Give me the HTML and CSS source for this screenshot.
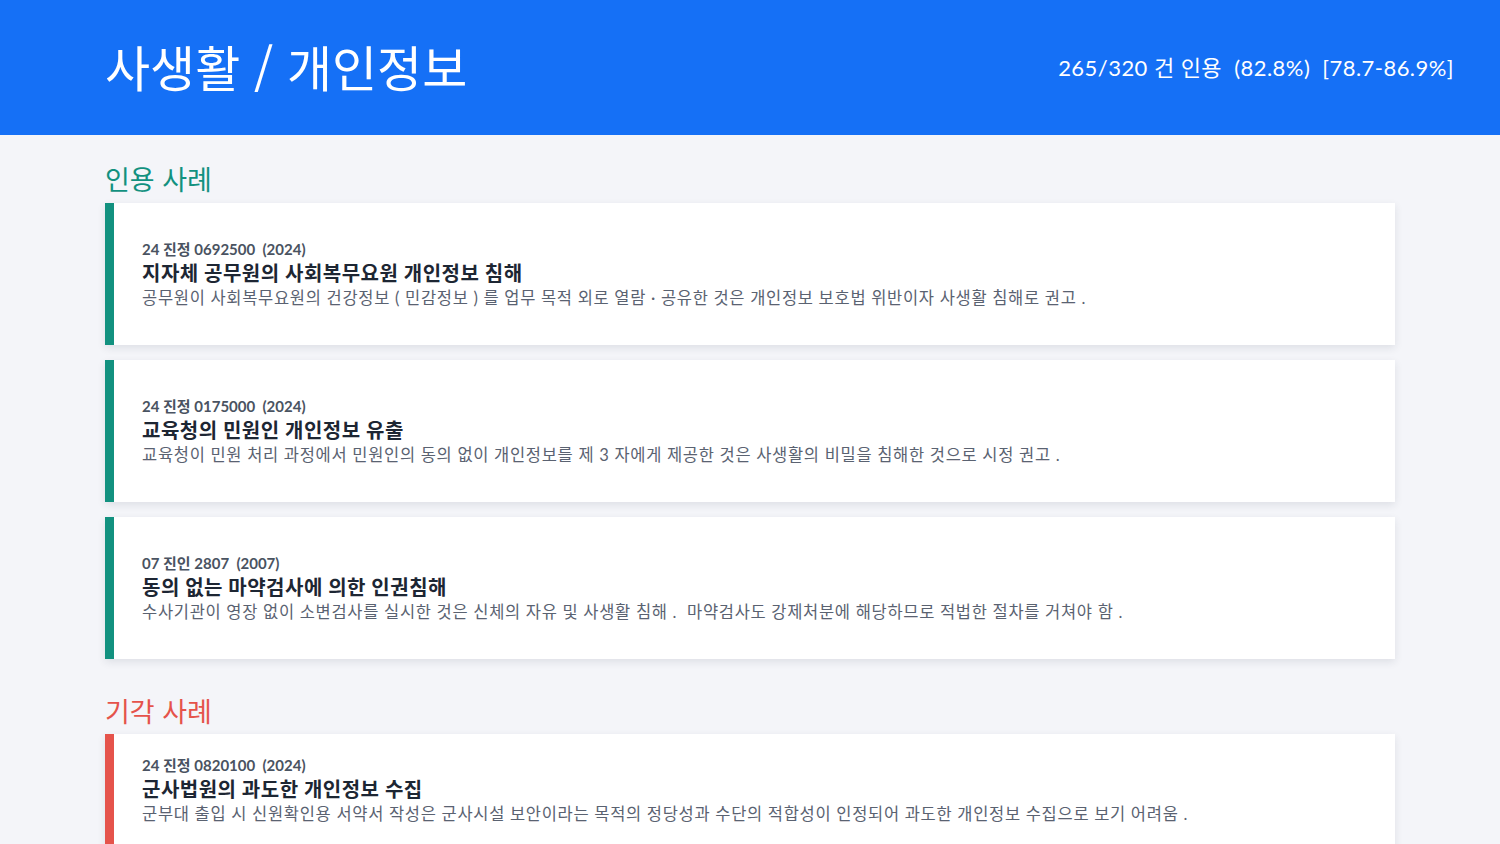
FILE: index.html
```html
<!DOCTYPE html>
<html lang="ko">
<head>
<meta charset="utf-8">
<link rel="stylesheet" href="styles.css">
</head>
<body>
<header class="hero">
  <h1 class="hero-title">사생활 / 개인정보</h1>
  <div class="hero-stat">265/320 건 인용 &nbsp;(82.8%) &nbsp;[78.7-86.9%]</div>
</header>
<main class="content">
  <h2 class="section-title accepted">인용 사례</h2>
  <div class="card-list">
    <article class="card accepted">
      <div class="card-meta">24 진정 0692500 &nbsp;(2024)</div>
      <div class="card-title">지자체 공무원의 사회복무요원 개인정보 침해</div>
      <div class="card-desc">공무원이 사회복무요원의 건강정보 ( 민감정보 ) 를 업무 목적 외로 열람 · 공유한 것은 개인정보 보호법 위반이자 사생활 침해로 권고 .</div>
    </article>
    <article class="card accepted">
      <div class="card-meta">24 진정 0175000 &nbsp;(2024)</div>
      <div class="card-title">교육청의 민원인 개인정보 유출</div>
      <div class="card-desc">교육청이 민원 처리 과정에서 민원인의 동의 없이 개인정보를 제 3 자에게 제공한 것은 사생활의 비밀을 침해한 것으로 시정 권고 .</div>
    </article>
    <article class="card accepted">
      <div class="card-meta">07 진인 2807 &nbsp;(2007)</div>
      <div class="card-title">동의 없는 마약검사에 의한 인권침해</div>
      <div class="card-desc">수사기관이 영장 없이 소변검사를 실시한 것은 신체의 자유 및 사생활 침해 . &nbsp;마약검사도 강제처분에 해당하므로 적법한 절차를 거쳐야 함 .</div>
    </article>
  </div>
  <h2 class="section-title rejected">기각 사례</h2>
  <div class="card-list">
    <article class="card rejected last">
      <div class="card-meta">24 진정 0820100 &nbsp;(2024)</div>
      <div class="card-title">군사법원의 과도한 개인정보 수집</div>
      <div class="card-desc">군부대 출입 시 신원확인용 서약서 작성은 군사시설 보안이라는 목적의 정당성과 수단의 적합성이 인정되어 과도한 개인정보 수집으로 보기 어려움 .</div>
    </article>
  </div>
</main>
</body>
</html>
```
FILE: styles.css
```css
* { box-sizing: border-box; }
html, body { margin: 0; padding: 0; }
body {
  width: 1500px;
  height: 844px;
  overflow: hidden;
  background: #f4f5f9;
  font-family: "Lato", "Noto Sans CJK KR", sans-serif;
}
.hero {
  height: 135px;
  background: #1570f6;
  color: #ffffff;
  display: flex;
  align-items: center;
  justify-content: space-between;
  padding: 0 46px 4px 105px;
}
.hero-title {
  margin: 0;
  font-family: "Noto Sans CJK KR", sans-serif;
  font-weight: 400;
  font-size: 49px;
  line-height: 1;
}
.hero-stat {
  font-size: 22px;
  letter-spacing: 0.45px;
  font-family: "Lato", "Noto Sans CJK KR", sans-serif;
  white-space: pre;
}
.content {
  padding: 0 105px;
}
.section-title {
  margin: 0;
  font-family: "Noto Sans CJK KR", sans-serif;
  font-weight: 400;
  font-size: 27px;
  line-height: 40px;
}
.section-title.accepted { color: #12917f; padding-top: 24px; height: 68px; }
.section-title.rejected { color: #e5534b; padding-top: 32px; height: 75px; }
.card-list {
  display: flex;
  flex-direction: column;
  gap: 15px;
}
.card {
  background: #ffffff;
  height: 142px;
  padding: 0 28px;
  border-left: 9px solid #12917f;
  box-shadow: 0 3px 8px rgba(30, 40, 60, 0.10);
  display: flex;
  flex-direction: column;
  justify-content: center;
}
.card.rejected { border-left-color: #e5534b; }
.card.last { justify-content: flex-start; padding-top: 21px; }
.card-meta {
  font-size: 15px;
  font-weight: 700;
  color: #4a5361;
  line-height: 20px;
  white-space: pre;
}
.card-title {
  font-size: 20px;
  font-weight: 700;
  letter-spacing: 0.5px;
  color: #1d2633;
  line-height: 28px;
}
.card-desc {
  font-size: 16.5px;
  letter-spacing: 0.7px;
  color: #5a6271;
  line-height: 22px;
}
```
